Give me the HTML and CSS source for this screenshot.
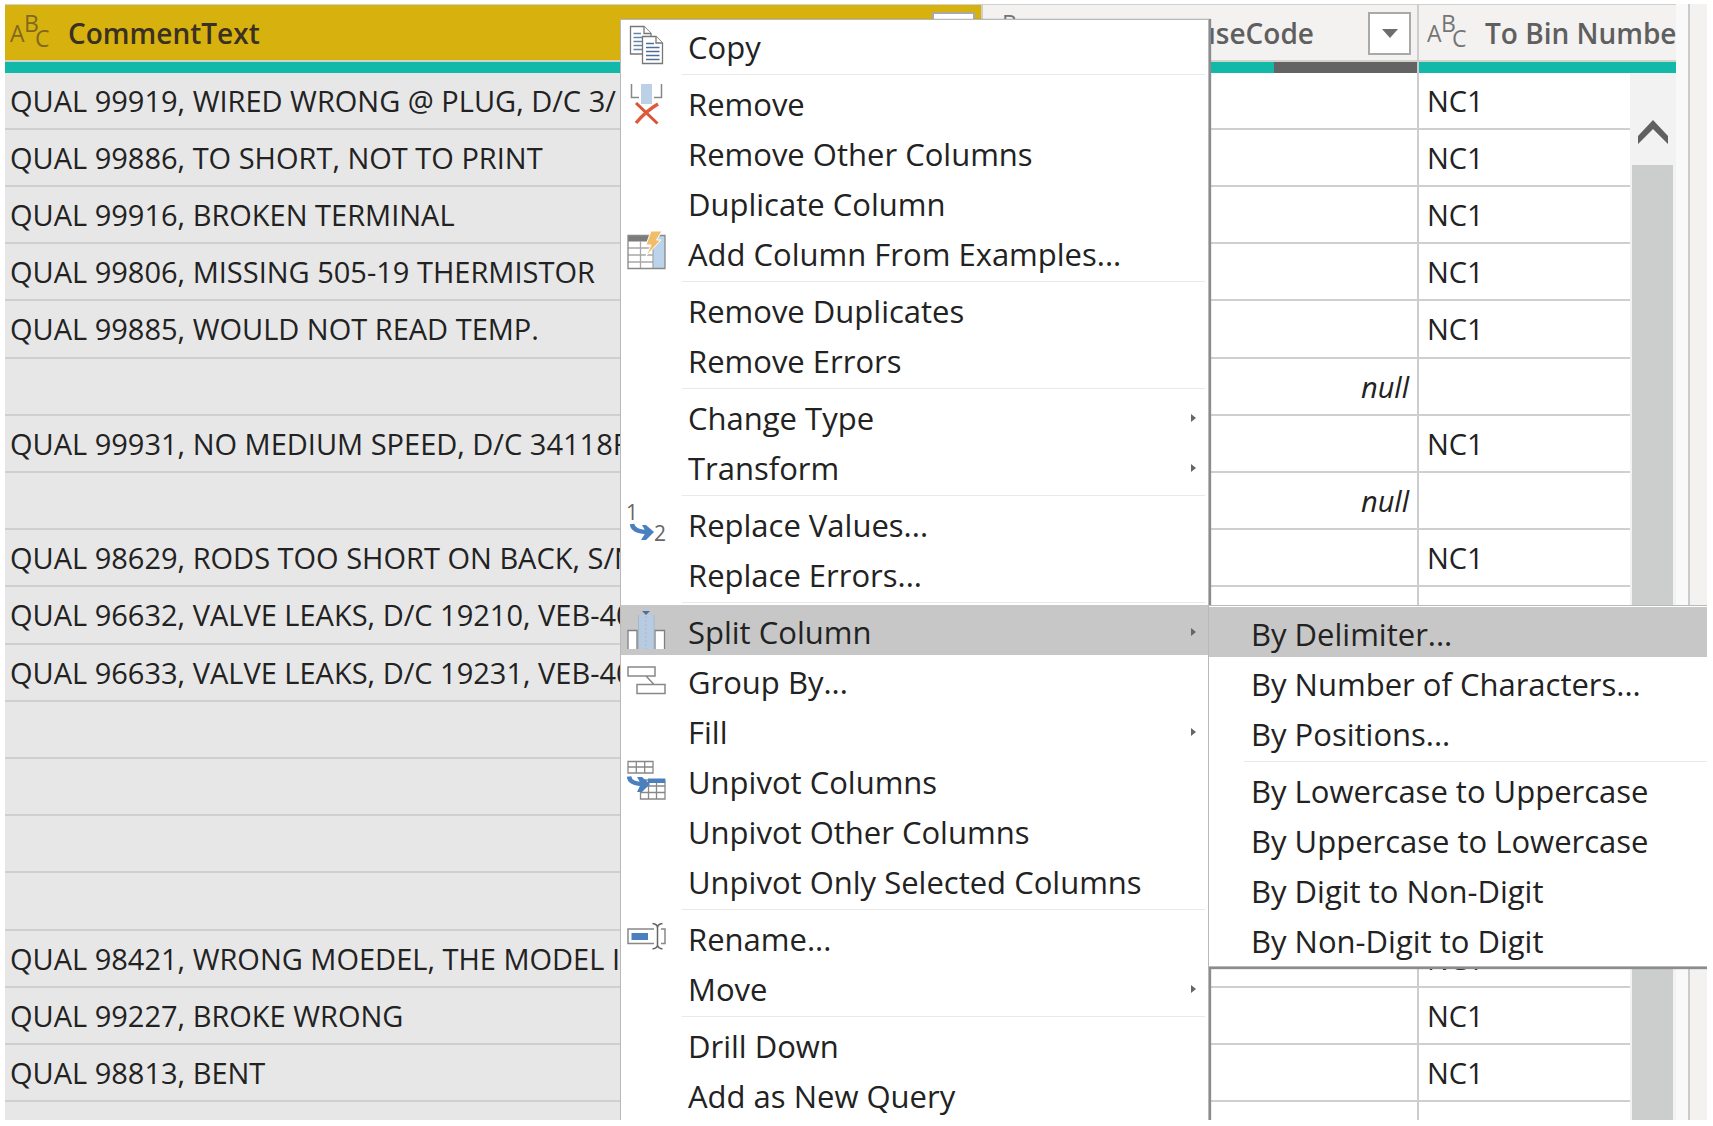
FILE: index.html
```html
<!DOCTYPE html>
<html lang="en">
<head>
<meta charset="utf-8">
<title>Query Editor</title>
<link rel="stylesheet" href="styles.css">
</head>
<body>
<svg width="0" height="0" class="defs" aria-hidden="true">
  <symbol id="abc" viewBox="0 0 42 36">
    <text x="0" y="27">A</text><text x="14" y="17">B</text><text x="25" y="32">C</text>
  </symbol>
</svg>
<main class="editor">
  <div class="grid">
    <table class="data">
      <colgroup><col class="col-comment"><col class="col-cause"><col></colgroup>
      <thead>
        <tr>
          <th class="selected" scope="col">
            <div class="head"><svg class="type"><use href="#abc"/></svg><span class="name">CommentText</span><button class="filter" aria-label="Filter CommentText"></button></div>
            <div class="quality"></div>
          </th>
          <th scope="col">
            <div class="head"><svg class="type"><use href="#abc"/></svg><span class="name end">CauseCode</span><button class="filter" aria-label="Filter CauseCode"></button></div>
            <div class="quality"><span class="empty" style="width:33%"></span></div>
          </th>
          <th scope="col">
            <div class="head"><svg class="type"><use href="#abc"/></svg><span class="name">To Bin Numbe</span></div>
            <div class="quality"></div>
          </th>
        </tr>
      </thead>
      <tbody>
        <tr><td>QUAL 99919, WIRED WRONG @ PLUG, D/C 3/</td><td></td><td>NC1</td></tr>
        <tr><td>QUAL 99886, TO SHORT, NOT TO PRINT</td><td></td><td>NC1</td></tr>
        <tr><td>QUAL 99916, BROKEN TERMINAL</td><td></td><td>NC1</td></tr>
        <tr><td>QUAL 99806, MISSING 505-19 THERMISTOR</td><td></td><td>NC1</td></tr>
        <tr><td>QUAL 99885, WOULD NOT READ TEMP.</td><td></td><td>NC1</td></tr>
        <tr><td></td><td>null</td><td></td></tr>
        <tr><td>QUAL 99931, NO MEDIUM SPEED, D/C 34118F</td><td></td><td>NC1</td></tr>
        <tr><td></td><td>null</td><td></td></tr>
        <tr><td>QUAL 98629, RODS TOO SHORT ON BACK, S/N</td><td></td><td>NC1</td></tr>
        <tr><td>QUAL 96632, VALVE LEAKS, D/C 19210, VEB-40</td><td></td><td></td></tr>
        <tr><td>QUAL 96633, VALVE LEAKS, D/C 19231, VEB-40</td><td></td><td></td></tr>
        <tr><td></td><td></td><td></td></tr>
        <tr><td></td><td></td><td></td></tr>
        <tr><td></td><td></td><td></td></tr>
        <tr><td></td><td></td><td></td></tr>
        <tr><td>QUAL 98421, WRONG MOEDEL, THE MODEL IS</td><td></td><td>NC1</td></tr>
        <tr><td>QUAL 99227, BROKE WRONG</td><td></td><td>NC1</td></tr>
        <tr><td>QUAL 98813, BENT</td><td></td><td>NC1</td></tr>
        <tr><td></td><td></td><td></td></tr>
      </tbody>
    </table>
    <div class="scrollbar">
      <button class="scroll-up" aria-label="Scroll up"><svg width="32" height="26" viewBox="0 0 32 26"><path d="M1 17 16 1 31 17V25L16 10 1 25Z" fill="#606060"/></svg></button>
      <div class="thumb"></div>
    </div>
  </div>
  <aside class="pane"></aside>

  <ul class="menu context" role="menu">
    <li><button role="menuitem"><svg class="icon" viewBox="0 0 40 40" fill="#fff" stroke="#777" stroke-width="1.3"><path d="M4.500 1.500H18L25 8.500V29H4.500Z"/><path d="M18 1.500V8.500H25"/><path d="M7.500 8.500H15M7.500 12.500H16M7.500 16.500H16M7.500 20.500H16M7.500 24.500H16" stroke="#6686a8"/><path d="M16.500 11.500H30L36.500 18V38.500H16.500Z"/><path d="M30 11.500V18H36.500"/><path d="M20 18.500H28M20 22.500H33.500M20 26.500H33.500M20 30.500H33.500M20 34.500H33.500" stroke="#4d7099"/></svg>Copy</button></li>
    <li role="separator"></li>
    <li><button role="menuitem"><svg class="icon" viewBox="0 0 40 40" fill="none"><path d="M5.500 2V15.500H13M35.500 2V15.500H28" stroke="#888" stroke-width="1.500"/><path d="M15 2H26V22H15Z" fill="#bcd0e8"/><path d="M10 21 31.500 41.500" stroke="#d95334" stroke-width="3"/><path d="M32 22 Q20 29 10 41" stroke="#e0593a" stroke-width="3.500"/></svg>Remove</button></li>
    <li><button role="menuitem"><span class="icon"></span>Remove Other Columns</button></li>
    <li><button role="menuitem"><span class="icon"></span>Duplicate Column</button></li>
    <li><button role="menuitem"><svg class="icon" viewBox="0 0 40 40"><path d="M2 3.500H39V36.500H2Z" fill="#fff"/><path d="M2 3.500H27V9.500H2Z" fill="#7b7b7b"/><path d="M27 3.500H39V36.500H27Z" fill="#bcd3ec"/><path d="M2 16H27M2 23H27M2 30H27M14.500 9V36M27 9V36" stroke="#a8a8a8" stroke-width="1.300"/><path d="M2 3.500H39V36.500H2Z" fill="none" stroke="#888" stroke-width="1.300"/><path d="M25-1H36L30.500 8H35L20 24L25 13H20Z" fill="#f2bd68" stroke="#fff"/></svg>Add Column From Examples...</button></li>
    <li role="separator"></li>
    <li><button role="menuitem"><span class="icon"></span>Remove Duplicates</button></li>
    <li><button role="menuitem"><span class="icon"></span>Remove Errors</button></li>
    <li role="separator"></li>
    <li><button role="menuitem" class="more"><span class="icon"></span>Change Type</button></li>
    <li><button role="menuitem" class="more"><span class="icon"></span>Transform</button></li>
    <li role="separator"></li>
    <li><button role="menuitem"><svg class="icon" viewBox="0 0 40 40"><text x="0" y="17">1</text><text x="28" y="38">2</text><path d="M6 21 Q7 29 22 29" fill="none" stroke="#4a80be" stroke-width="4.500"/><path d="M16 22H20L28 29 20 37H15L20 29Z" fill="#4a80be"/></svg>Replace Values...</button></li>
    <li><button role="menuitem"><span class="icon"></span>Replace Errors...</button></li>
    <li role="separator"></li>
    <li><button role="menuitem" class="more active"><svg class="icon" viewBox="0 0 40 40"><path d="M2 39V20.500H11V39M29 39V20.500H38.500V39" fill="#fff" stroke="#808080" stroke-width="1.300"/><path d="M12 5H28V39H12Z" fill="#b9cbe0"/><path d="M12.500 5V39M28 5V39" stroke="#a3b8d0"/><path d="M20 6V39" stroke="#a3b8d0" stroke-dasharray="2 2"/><path d="M16 1H24L20 5Z" fill="#4470ad"/></svg>Split Column</button></li>
    <li><button role="menuitem"><svg class="icon" viewBox="0 0 40 40" fill="#fff" stroke="#888" stroke-width="1.500"><path d="M2 7H29V16H2ZM11 24.500H39V33.500H11ZM20 16 28 24.500"/></svg>Group By...</button></li>
    <li><button role="menuitem" class="more"><span class="icon"></span>Fill</button></li>
    <li><button role="menuitem"><svg class="icon" viewBox="0 0 40 40" fill="none" stroke="#888" stroke-width="1.300"><path d="M2 1.500H27V13H2ZM2 7H27M10.300 1.500V13M18.700 1.500V13"/><path d="M14.500 20H39V39H14.500Z" fill="#fff"/><path d="M14.500 26H39M14.500 32.500H39M22.500 20V39M30.500 20V39"/><path d="M22 18.500H39V23H22Z" fill="#4a80be" stroke="none"/><path d="M3 16.500 Q4 24 17 24" stroke="#4a80be" stroke-width="4.500"/><path d="M11 17H16L24 24 16 32H11L15 24Z" fill="#4a80be" stroke="none"/></svg>Unpivot Columns</button></li>
    <li><button role="menuitem"><span class="icon"></span>Unpivot Other Columns</button></li>
    <li><button role="menuitem"><span class="icon"></span>Unpivot Only Selected Columns</button></li>
    <li role="separator"></li>
    <li><button role="menuitem"><svg class="icon" viewBox="0 0 40 40" fill="none" stroke="#888" stroke-width="1.500"><path d="M28 12H2V26.500H28M35 12H39V26.500H35"/><path d="M5.500 16H22V23H5.500Z" fill="#4a80be" stroke="none"/><path d="M26.500 6.500Q31.500 7 31.500 11V28Q31.500 31 26.500 32M36.500 6.500Q31.500 7 31.500 11M31.500 28Q31.500 31 36.500 32" stroke="#666"/></svg>Rename...</button></li>
    <li><button role="menuitem" class="more"><span class="icon"></span>Move</button></li>
    <li role="separator"></li>
    <li><button role="menuitem"><span class="icon"></span>Drill Down</button></li>
    <li><button role="menuitem"><span class="icon"></span>Add as New Query</button></li>
  </ul>

  <ul class="menu submenu" role="menu">
    <li><button role="menuitem" class="active">By Delimiter...</button></li>
    <li><button role="menuitem">By Number of Characters...</button></li>
    <li><button role="menuitem">By Positions...</button></li>
    <li role="separator"></li>
    <li><button role="menuitem">By Lowercase to Uppercase</button></li>
    <li><button role="menuitem">By Uppercase to Lowercase</button></li>
    <li><button role="menuitem">By Digit to Non-Digit</button></li>
    <li><button role="menuitem">By Non-Digit to Digit</button></li>
  </ul>
</main>
</body>
</html>
```
FILE: styles.css
```css
* { box-sizing: border-box; }

body {
  margin: 0;
  padding: 4px 6px 6px 5px;
  height: 100vh;
  background: #fff;
  color: #222;
  font-family: "Open Sans", "Noto Sans", sans-serif;
  font-size: 29px;
}

button {
  padding: 0;
  border: 0;
  background: none;
  color: inherit;
  font: inherit;
}

.defs { position: absolute; }

.editor {
  position: relative;
  display: flex;
  height: 100%;
  overflow: hidden;
}

.grid {
  position: relative;
  flex: 1;
  min-width: 0;
}

/* Data table */
.data {
  width: 100%;
  table-layout: fixed;
  border-collapse: separate;
  border-spacing: 0;
}

.col-comment { width: 978px; }
.col-cause { width: 436px; }

th {
  height: 69px;
  padding: 0;
  border-top: 1px solid #d0d0d0;
  border-right: 2px solid #cdcdcd;
  background: #f3f2f1;
  color: #5f5f5f;
  text-align: left;
  vertical-align: top;
}

th:last-child, td:last-child { border-right: 0; }

.head {
  display: flex;
  align-items: center;
  gap: 16px;
  height: 55px;
  padding: 1px 6px 0 5px;
  overflow: hidden;
}

th:last-child .head { padding: 1px 0 0 8px; }

.selected { color: #3a3023; }
.selected .head { background: #d7b20f; }

.type {
  flex: none;
  width: 42px;
  height: 36px;
  fill: #757575;
  font-size: 23px;
  font-weight: 500;
}

.selected .type { fill: #80691f; }

.name {
  flex: 1;
  font-weight: 600;
  font-size: 28px;
  line-height: 36px;
  white-space: nowrap;
}

.name.end { padding-right: 38px; text-align: right; }

.filter {
  flex: none;
  display: grid;
  place-items: center;
  width: 43px;
  height: 43px;
  border: 2px solid #a9a9a9;
  background: #fff;
}

.filter::after {
  content: "";
  border: 8px solid transparent;
  border-top: 9px solid #6d6d6d;
  border-bottom: 0;
}

.quality {
  display: flex;
  justify-content: flex-end;
  height: 13px;
  border-top: 2px solid #d2d2cc;
  background: #12b8a8;
}

.empty { background: #636363; }

td {
  height: 57px;
  padding: 0 5px;
  border-right: 2px solid #cdcdcd;
  border-bottom: 2px solid #cfcfcf;
  line-height: 36px;
  white-space: nowrap;
  overflow: hidden;
}

tr:nth-child(5n) td { height: 58px; }

td:first-child { background: #e7e7e7; }

td:nth-child(2) {
  padding-right: 8px;
  font-style: italic;
  text-align: right;
}

td:last-child { padding-left: 8px; }

.scrollbar {
  position: absolute;
  top: 69px;
  right: 0;
  bottom: 0;
  display: flex;
  flex-direction: column;
  width: 46px;
  padding: 0 3px 0 2px;
  background: #f2f2f2;
}

.scroll-up {
  height: 92px;
  padding-top: 26px;
  line-height: 0;
}

.thumb { flex: 1; background: #cccdcd; }

.pane {
  width: 31px;
  border-left: 12px solid #f9f9f9;
  background: linear-gradient(to right, #cbcbcb 2px, #f3f2f1 2px);
}

/* Menus */
.menu {
  position: absolute;
  margin: 0;
  padding: 0;
  border: 1px solid #b9b9b9;
  background: #fff;
  font-size: 31px;
  list-style: none;
}

.context {
  top: 15px;
  left: 615px;
  width: 589px;
  padding-bottom: 20px;
  box-shadow: 2px 0 1px #8c8c8c;
}

.submenu {
  top: 601px;
  left: 1203px;
  right: 0;
  padding: 1px 0 2px;
  border-right: 0;
  box-shadow: 1px 2px 1px #8c8c8c;
}

.menu button {
  display: flex;
  align-items: center;
  gap: 22px;
  width: 100%;
  height: 50px;
  padding: 4px 0 0 5px;
  line-height: 40px;
  text-align: left;
  white-space: nowrap;
}

.submenu button { padding-left: 42px; }

.menu .active { background: #c7c7c7; }

.menu [role="separator"] {
  height: 7px;
  margin: 0 3px 0 61px;
  border-top: 4px solid #fff;
  background: linear-gradient(#e9e9e9 1px, #fff 1px);
}

.submenu [role="separator"] { margin: 0 0 0 35px; }

.icon {
  flex: none;
  width: 40px;
  height: 40px;
  margin-bottom: 4px;
  overflow: visible;
  font-size: 21px;
}

.icon text { fill: #666; }

.more::after {
  content: "";
  margin: 0 12px 0 auto;
  border: 4px solid transparent;
  border-left: 5px solid #666;
  border-right: 0;
}
```
